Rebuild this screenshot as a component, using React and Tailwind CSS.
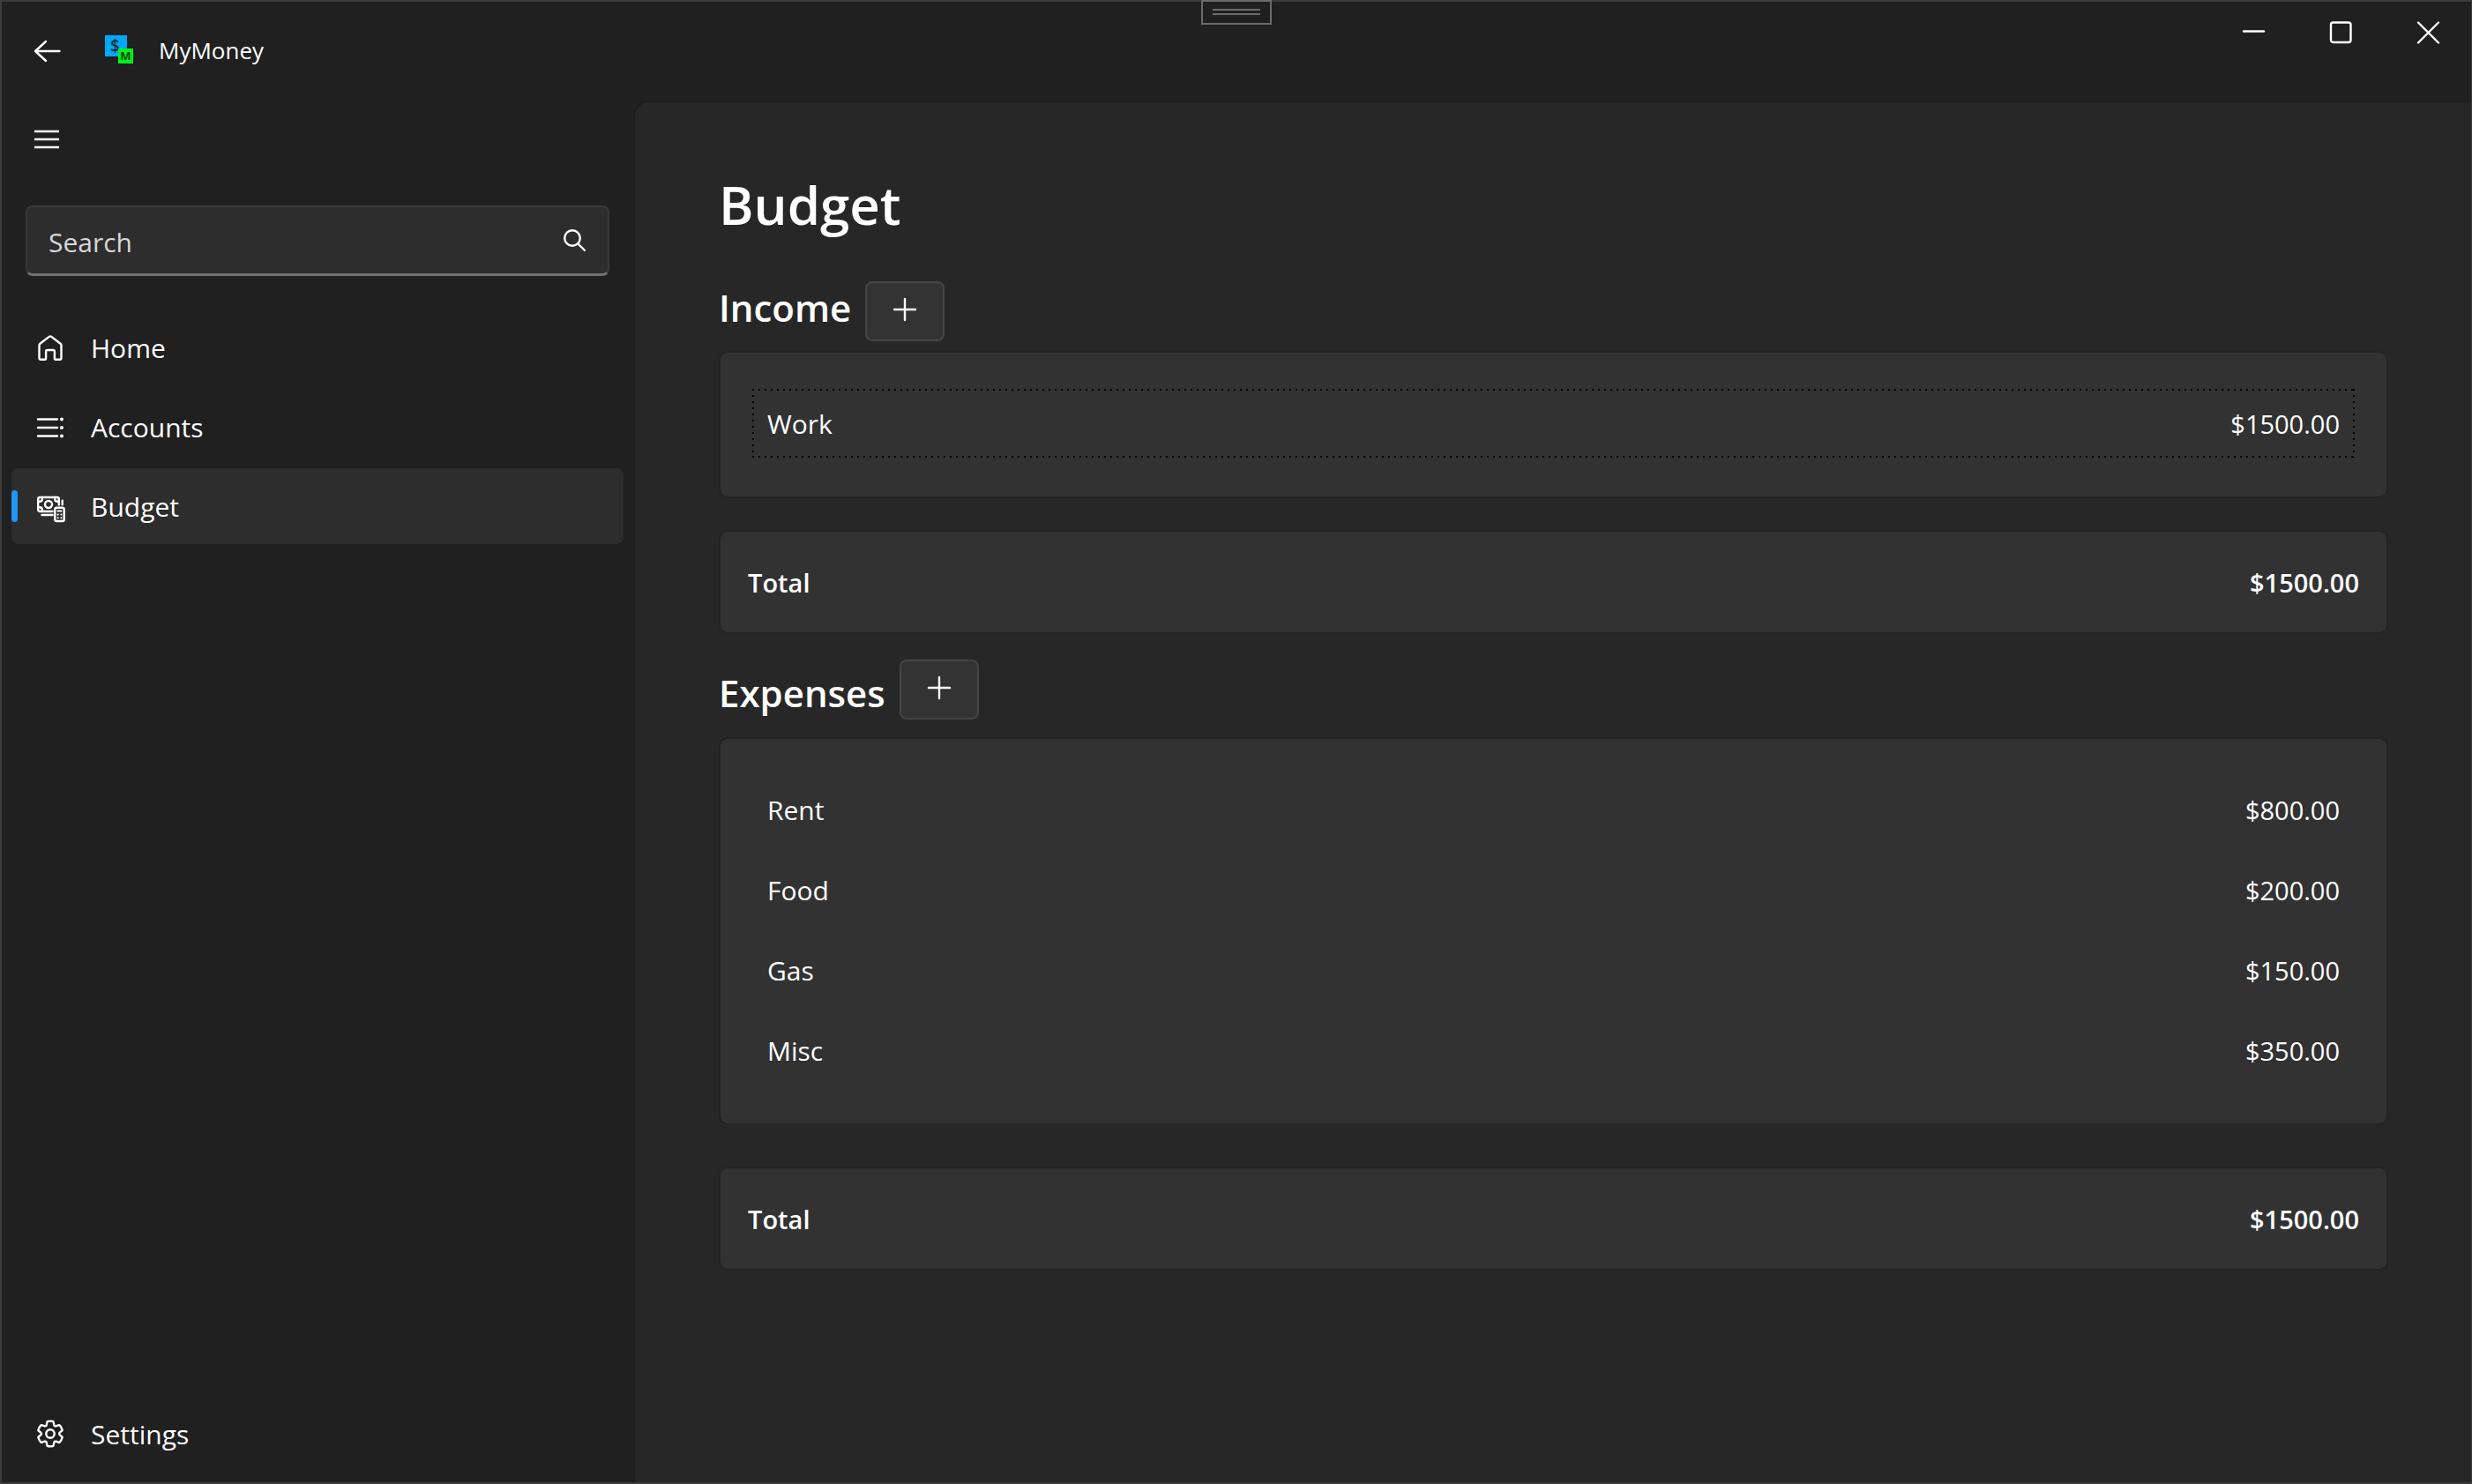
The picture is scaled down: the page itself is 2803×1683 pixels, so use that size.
const INCOME = [{ name: "Work", amount: "$1500.00", focused: true }];

const EXPENSES = [
  { name: "Rent", amount: "$800.00" },
  { name: "Food", amount: "$200.00" },
  { name: "Gas", amount: "$150.00" },
  { name: "Misc", amount: "$350.00" },
];

function Icon({ children, className = "size-8", viewBox = "0 0 32 32" }) {
  return (
    <svg
      aria-hidden="true"
      viewBox={viewBox}
      className={`${className} shrink-0 overflow-visible`}
      fill="none"
      stroke="currentColor"
      strokeWidth="2.4"
      strokeLinecap="round"
      strokeLinejoin="round"
    >
      {children}
    </svg>
  );
}

function HomeIcon() {
  return (
    <Icon>
      <path d="M3.5 13.6q0-1.1.9-1.8L14.7 3.9q1.3-1 2.6 0l10.3 7.9q.9.7.9 1.8V28q0 1.8-1.8 1.8h-4.2q-1.6 0-1.6-1.6v-7.6q0-1.6-1.6-1.6h-6.6q-1.6 0-1.6 1.6v7.6q0 1.6-1.6 1.6H5.3q-1.8 0-1.8-1.8z" />
    </Icon>
  );
}

function AccountsIcon() {
  return (
    <Icon>
      <path d="M2 7.5h22M2 17h22M2 26.5h22" />
      <g fill="currentColor" stroke="none">
        <circle cx="29" cy="7.5" r="2" />
        <circle cx="29" cy="17" r="2" />
        <circle cx="29" cy="26.5" r="2" />
      </g>
    </Icon>
  );
}

function BudgetIcon() {
  return (
    <Icon>
      <path d="M18.5 22H4.200Q2.200 22 2.200 20V8q0-2 2-2h19.600q2 0 2 2v6.500" />
      <path d="M2.200 10.800h1.800q2.800 0 2.800-2.800V6M25.800 10.800h-1.800q-2.800 0-2.800-2.800V6M2.200 17.200h1.800q2.800 0 2.800 2.800v2" />
      <circle cx="14" cy="14" r="4" />
      <path d="M29.7 9.8v4.5M6.500 26h12" />
      <rect x="21.3" y="17.8" width="10.4" height="15.2" rx="2" />
      <path d="M24.5 21.6h4" strokeWidth="2" />
      <path d="M24.6 25.6h.1M28.4 25.6h.1M24.6 29.3h.1M28.4 29.3h.1" strokeWidth="2.1" />
    </Icon>
  );
}

function SettingsIcon() {
  return (
    <Icon viewBox="0.5 0.5 19 19">
      <g strokeWidth="1.4">
        <path d="M1.91 7.38A8.5 8.5 0 0 1 3.7 4.3a.5.5 0 0 1 .54-.13l1.92.68a1 1 0 0 0 1.32-.76l.36-2a.5.5 0 0 1 .4-.4 8.53 8.53 0 0 1 3.55 0c.2.04.35.2.38.4l.37 2a1 1 0 0 0 1.32.76l1.92-.68a.5.5 0 0 1 .54.13 8.5 8.5 0 0 1 1.78 3.08c.06.2 0 .4-.15.54l-1.56 1.32a1 1 0 0 0 0 1.52l1.56 1.32a.5.5 0 0 1 .15.54 8.5 8.5 0 0 1-1.78 3.08.5.5 0 0 1-.54.13l-1.92-.68a1 1 0 0 0-1.32.76l-.37 2a.5.5 0 0 1-.38.4 8.53 8.53 0 0 1-3.56 0 .5.5 0 0 1-.39-.4l-.36-2a1 1 0 0 0-1.32-.76l-1.92.68a.5.5 0 0 1-.54-.13 8.5 8.5 0 0 1-1.78-3.08.5.5 0 0 1 .15-.54l1.56-1.32a1 1 0 0 0 0-1.52L2.06 7.92a.5.5 0 0 1-.15-.54z" />
        <circle cx="10" cy="10" r="2.8" />
      </g>
    </Icon>
  );
}

function Logo() {
  return (
    <svg viewBox="0 0 32 32" className="mb-1 ml-[49px] size-8 shrink-0" role="img" aria-label="MyMoney logo">
      <rect width="25" height="24" fill="#00a8f8" />
      <text x="11.5" y="19" textAnchor="middle" fill="#10303f" className="font-['Open_Sans'] text-[19px] font-semibold">
        $
      </text>
      <rect x="15" y="15" width="17" height="17" fill="#00f218" />
      <text x="23.5" y="28" textAnchor="middle" fill="#0a4a10" className="font-['Open_Sans'] text-[13px] font-bold">
        M
      </text>
    </svg>
  );
}

function TitleBar() {
  return (
    <header className="flex h-28 shrink-0 items-center">
      <button type="button" aria-label="Back" className="ml-9">
        <Icon>
          <path d="M2 16h27.5M14 5 2 16l12 11" />
        </Icon>
      </button>
      <Logo />
      <span className="ml-[29px] pb-0.5 text-[26px] leading-9">MyMoney</span>
      <div className="ml-auto flex self-start">
        <button type="button" aria-label="Minimize" className="flex h-[70px] w-[99px] items-center justify-center">
          <Icon className="size-[26px]" viewBox="0 0 26 26">
            <path d="M2 11.5h23" />
          </Icon>
        </button>
        <button type="button" aria-label="Maximize" className="flex h-[70px] w-[99px] items-center justify-center">
          <Icon className="size-[26px]" viewBox="0 0 26 26">
            <rect x="2" y="1.5" width="22.5" height="22.5" rx="2.5" />
          </Icon>
        </button>
        <button type="button" aria-label="Close" className="flex h-[70px] w-[99px] items-center justify-center">
          <Icon className="size-[26px]" viewBox="0 0 26 26">
            <path d="M2 1.5l23 23M25 1.5l-23 23" />
          </Icon>
        </button>
      </div>
    </header>
  );
}

function NavItem({ icon, label, selected = false }) {
  return (
    <a
      href={`#${label.toLowerCase()}`}
      aria-current={selected ? "page" : undefined}
      className={`relative flex h-[86px] items-center rounded-lg pl-7 text-[30px] leading-10 ${selected ? "bg-[#2d2d2d]" : ""}`}
    >
      {selected && <span className="absolute left-0 h-9 w-[7px] rounded-full bg-[#1f95f5]" />}
      {icon}
      <span className="ml-[30px] pt-0.5">{label}</span>
    </a>
  );
}

function Sidebar() {
  return (
    <aside className="flex w-[716px] shrink-0 flex-col px-[11px] pb-3 pt-[30px]">
      <button type="button" aria-label="Toggle navigation" className="ml-6 size-8">
        <Icon>
          <path d="M2 5h28M2 14h28M2 23h28" strokeLinecap="butt" />
        </Icon>
      </button>
      <label className="mx-4 mt-[57px] flex h-20 items-center rounded-lg border-2 border-b-[3px] border-[#393939] border-b-[#707070] bg-[#2d2d2d] px-6">
        <input
          type="text"
          aria-label="Search"
          placeholder="Search"
          className="min-w-0 flex-1 bg-transparent pt-1 text-[30px] leading-10 outline-none placeholder:text-[#d8d8d8]"
        />
        <Icon className="size-[26px]" viewBox="0 0 26 26">
          <circle cx="10" cy="10" r="8.8" />
          <path d="M16.5 16.5l7.5 7.5" />
        </Icon>
      </label>
      <nav aria-label="Main" className="mt-[38px] flex flex-1 flex-col gap-1">
        <NavItem icon={<HomeIcon />} label="Home" />
        <NavItem icon={<AccountsIcon />} label="Accounts" />
        <NavItem icon={<BudgetIcon />} label="Budget" selected />
        <div className="mt-auto">
          <NavItem icon={<SettingsIcon />} label="Settings" />
        </div>
      </nav>
    </aside>
  );
}

function SectionHeader({ title, className }) {
  return (
    <div className={`flex h-[68px] gap-4 ${className}`}>
      <h2 className="text-[42px] font-semibold leading-[60px]">{title}</h2>
      <button
        type="button"
        aria-label={`Add to ${title}`}
        className="flex h-[68px] w-[90px] items-center justify-center rounded-lg border-2 border-[#454545] bg-[#333333] pb-1"
      >
        <Icon className="size-[26px]" viewBox="0 0 26 26">
          <path d="M13 1v24M1 13h24" />
        </Icon>
      </button>
    </div>
  );
}

function EntryList({ entries, className }) {
  return (
    <ul
      className={`flex flex-col gap-[13px] rounded-[10px] border-2 border-[#242424] bg-[#323232] bg-clip-padding px-9 pb-11 pt-[41px] leading-10 ${className}`}
    >
      {entries.map(({ name, amount, focused }) => (
        <li
          key={name}
          className={`flex h-[78px] items-center justify-between px-[17px] pt-0.5 ${
            focused
              ? "[background:repeating-linear-gradient(90deg,#000_0_2px,transparent_2px_7px)_0_0/100%_2px_no-repeat,repeating-linear-gradient(90deg,#000_0_2px,transparent_2px_7px)_0_100%/100%_2px_no-repeat,repeating-linear-gradient(#000_0_2px,transparent_2px_7px)_0_0/2px_100%_no-repeat,repeating-linear-gradient(#000_0_2px,transparent_2px_7px)_100%_0/2px_100%_no-repeat]"
              : ""
          }`}
        >
          <span className="text-[30px]">{name}</span>
          <span className="text-[29px]">{amount}</span>
        </li>
      ))}
    </ul>
  );
}

function TotalCard({ amount, className }) {
  return (
    <div
      className={`flex h-[118px] items-center justify-between rounded-[10px] border-2 border-[#242424] bg-[#323232] bg-clip-padding px-[31px] pt-0.5 text-[29px] font-semibold leading-10 ${className}`}
    >
      <span>Total</span>
      <span>{amount}</span>
    </div>
  );
}

export default function App() {
  return (
    <div className="relative flex min-h-screen flex-col border-2 border-r border-[#3b3b3b] bg-[#202020] font-['Open_Sans',sans-serif] text-white">
      <div className="absolute -top-0.5 left-1/2 flex h-7 w-20 -translate-x-1/2 flex-col gap-[3px] border-2 border-[#6b6b6b] px-[11px] pt-2">
        <span className="h-0.5 bg-[#6b6b6b]" />
        <span className="h-0.5 bg-[#6b6b6b]" />
      </div>
      <TitleBar />
      <div className="flex flex-1">
        <Sidebar />
        <main className="min-w-0 flex-1 rounded-tl-[18px] border-l-2 border-t-2 border-[#1d1d1d] bg-[#272727] pl-[95px] pr-[94px] pt-[76px]">
          <h1 className="text-[60px] font-semibold leading-[80px]">Budget</h1>
          <section>
            <SectionHeader title="Income" className="mt-[47px] items-start" />
            <EntryList entries={INCOME} className="mt-[11px]" />
            <TotalCard amount="$1500.00" className="mt-9" />
          </section>
          <section>
            <SectionHeader title="Expenses" className="mt-[29px] items-end" />
            <EntryList entries={EXPENSES} className="mt-5" />
            <TotalCard amount="$1500.00" className="mt-[47px]" />
          </section>
        </main>
      </div>
    </div>
  );
}
